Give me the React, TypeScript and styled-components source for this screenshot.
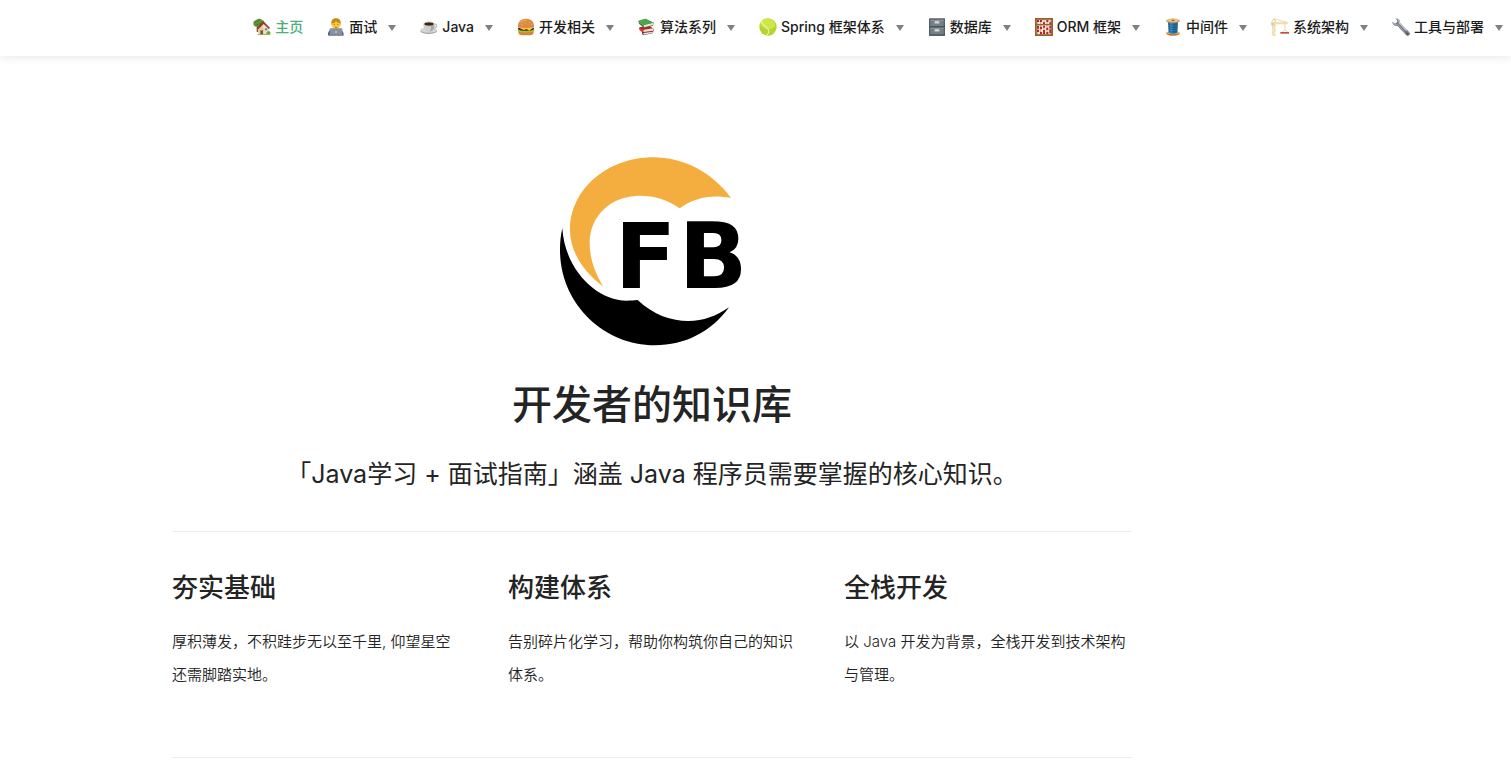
import React from "react";
import styled, { createGlobalStyle } from "styled-components";

const GlobalStyle = createGlobalStyle`
  *, *::before, *::after { box-sizing: border-box; }
  body {
    margin: 0;
    background: #fff;
    color: #242424;
    font-family: Inter, "Noto Sans CJK SC", "Liberation Sans", sans-serif;
    -webkit-font-smoothing: antialiased;
  }
`;

const Header = styled.header`
  padding: 16px 8px 18px;
  background: #fff;
  box-shadow: 0 2px 8px #e9eaec;
`;

const NavList = styled.ul`
  display: flex;
  justify-content: flex-end;
  gap: 24px;
  margin: 0;
  padding: 0;
  list-style: none;
`;

const navItem = `
  display: flex;
  align-items: center;
  gap: 4px;
  padding: 0;
  border: 0;
  background: none;
  font: inherit;
  font-size: 14px;
  font-weight: 500;
  line-height: 22px;
  white-space: nowrap;
  text-decoration: none;
  cursor: pointer;
`;

const NavLink = styled.a`
  ${navItem}
  color: #4dae7c;
`;

const NavButton = styled.button`
  ${navItem}
  color: #1c1c1c;
`;

const Caret = styled.span`
  margin: 2px 0 0 7px;
  border-left: 4px solid transparent;
  border-right: 4px solid transparent;
  border-top: 6px solid #808080;
`;

const Icon = styled.svg`
  flex: none;
  width: 18px;
  height: 18px;
`;

const Page = styled.div`
  padding: 0 207px 0 0;

  @media (max-width: 1200px) {
    padding: 0 24px;
  }
`;

const Main = styled.main`
  max-width: 960px;
  margin: 0 auto;
  padding-top: 94px;
`;

const Hero = styled.section`
  display: flex;
  flex-direction: column;
  align-items: center;
  padding-bottom: 40px;
  text-align: center;
`;

const Logo = styled.svg`
  width: 200px;
  height: 200px;
`;

const Title = styled.h1`
  margin: 30px 0 0;
  font-size: 40px;
  font-weight: 500;
  line-height: 50px;
`;

const Tagline = styled.p`
  margin: 27px 0 0;
  font-size: 25px;
  font-weight: 400;
  line-height: 34px;
`;

const Features = styled.section`
  display: flex;
  flex-wrap: wrap;
  justify-content: space-between;
  padding: 40px 0 66px;
  border-top: 1px solid #eaecef;
  border-bottom: 1px solid #eaecef;
`;

const Feature = styled.article`
  flex: 0 0 30%;
`;

const FeatureTitle = styled.h2`
  margin: 0 0 21px;
  font-size: 26px;
  font-weight: 500;
  line-height: 32px;
`;

const FeatureText = styled.p`
  margin: 0;
  font-size: 15px;
  font-weight: 350;
  line-height: 33px;
`;

const houseIcon = (
  <>
    <rect x="11" y="24" width="5" height="18" fill="#80552f" />
    <path d="M2 20C-1 12 4 7 9 7c4-6 14-6 18-1 6 0 9 7 5 12-2 7-8 7-13 6-5 4-15 3-17-4z" fill="#5a9436" />
    <path d="M6 13c4-4 9-3 12-6M9 21c5-2 9-1 14-5" stroke="#3f7526" strokeWidth="2" fill="none" />
    <path d="M17 29 32 16l17 14v19H17z" fill="#f3dfba" />
    <path d="M17 31 24 21l8 10v18H17z" fill="#e5caa0" />
    <path d="M12 30 27 11h6l18 19-4 3-15-15-16 16z" fill="#8f3d35" />
    <rect x="22" y="37" width="8" height="13" fill="#8a552c" />
    <rect x="35" y="30" width="8" height="8" fill="#648ca8" stroke="#fff" strokeWidth="1" />
    <path d="M14 50h38v-3c2-5-2-9-6-7-5 0-6 4-6 8H14z" fill="#6da544" />
  </>
);

const coderIcon = (
  <>
    <path d="M3 52c0-12 5-17 14-18h18c10 1 15 7 15 18z" fill="#3347b8" />
    <path d="M20 28h13v9l-7 4-6-4z" fill="#e9ae2e" />
    <path d="M13 17C12 6 18 1 27 1s15 5 14 16l-2 8H15z" fill="#c78a18" />
    <path d="M15 16c6 0 10-3 12-7 3 4 7 6 12 7 0 11-4 18-12 18S15 27 15 16z" fill="#ffc93c" />
    <path d="M20 19h4M30 19h4M23 27q4 3 8 0" stroke="#855015" strokeWidth="2" fill="none" />
    <rect x="8" y="31" width="38" height="21" rx="2" fill="#8c929b" />
    <path d="M5 50h44v3H5z" fill="#737982" />
    <circle cx="27" cy="42" r="2.5" fill="#e8edf3" />
  </>
);

const coffeeIcon = (
  <>
    <ellipse cx="26" cy="39" rx="25" ry="9" fill="#a4a4a3" />
    <ellipse cx="26" cy="36" rx="25" ry="8" fill="#d6d6d4" />
    <path d="M42 18c9-2 11 9 1 13" fill="none" stroke="#bcbcb9" strokeWidth="4" />
    <path d="M10 17h34c0 14-6 24-17 24S10 31 10 17z" fill="#cfcfcc" />
    <path d="M32 20h12c-1 12-6 20-15 21 4-6 4-14 3-21z" fill="#a9a9a6" />
    <ellipse cx="27" cy="17" rx="17" ry="7" fill="#e3e3e0" />
    <ellipse cx="27" cy="18" rx="14" ry="5" fill="#402319" />
    <path d="M23 13c-3-4 4-6 1-11M30 13c-2-4 4-5 1-9" stroke="#dedede" strokeWidth="2" fill="none" />
  </>
);

const burgerIcon = (
  <>
    <path d="M4 38h46c1 9-3 14-12 14H16C7 52 3 47 4 38z" fill="#d4853a" />
    <path d="M2 36c4-4 8 2 12-1h25c5 2 9-2 13 1 1 5-5 7-9 5-5 4-9 0-13 2-4-2-8 2-13-1-7 2-16 0-15-6z" fill="#9cc63a" />
    <path d="M3 29h48v5c-8 6-40 6-48 0z" fill="#4c2317" />
    <path d="M5 29h44L36 38l-7-5-8 3z" fill="#ffcb31" />
    <path d="M3 27C2 10 12 2 27 2s25 8 24 25c-4 4-44 4-48 0z" fill="#dc8b42" />
    <path d="M8 17C12 7 21 4 31 6c-9 1-18 4-23 11z" fill="#f2b36d" />
    <path d="M17 12h2M27 9h2M36 13h2M24 16h2M43 19h2M14 20h2" stroke="#ffe4b0" strokeWidth="2" />
  </>
);

const booksIcon = (
  <>
    <path d="m12 40 28-4 6 9-29 7-5-4z" fill="#32496c" />
    <path d="m15 44 27-5 3 5-27 6z" fill="#e8e9e5" />
    <path d="m4 28 31-5 12 10-1 8-30 4L4 35z" fill="#b91f24" />
    <path d="m14 36 31-5v7l-29 4z" fill="#eee9dd" />
    <path d="M16 43 5 34v-5l12 8z" fill="#e03a36" />
    <path d="M1 9 22 2l25 12-2 9-27 7L3 17z" fill="#2e813e" />
    <path d="m17 21 28-7v7l-27 7z" fill="#e8e8d9" />
    <path d="M1 9 22 2l25 12-29 7z" fill="#54a249" />
    <path d="m2 12 15 9" stroke="#79c765" strokeWidth="2" />
  </>
);

const tennisIcon = (
  <>
    <circle cx="27" cy="27" r="26" fill="#b7d532" />
    <path d="M4 15C9 4 23-1 35 3c10 5 14 12 13 22-8 10-24 11-33 5C8 26 5 22 4 15z" fill="#cfe648" />
    <path d="M7 10c2 13 20 14 22 27 1 6-2 10-5 15" fill="none" stroke="#f7f9dc" strokeWidth="3" />
  </>
);

const cabinetIcon = (
  <>
    <rect x="3" y="1" width="48" height="52" rx="2" fill="#555f65" />
    <rect x="7" y="5" width="40" height="20" fill="#748087" />
    <rect x="7" y="29" width="40" height="20" fill="#748087" />
    <path d="M7 5h40v4H7zM7 29h40v4H7z" fill="#89949a" />
    <rect x="20" y="10" width="14" height="7" rx="1" fill="#e5e9e9" />
    <rect x="20" y="34" width="14" height="7" rx="1" fill="#e5e9e9" />
    <path d="M21 14h12v4H21zM21 38h12v4H21z" fill="#a0a9ac" />
    <path d="M3 26h48M3 52h48" stroke="#394348" strokeWidth="2" />
  </>
);

const abacusIcon = (
  <>
    <rect width="54" height="54" fill="#94602b" />
    <rect x="5" y="5" width="44" height="44" fill="#f4e8dc" />
    <path d="M8 5v44M17 5v44M27 5v44M36 5v44M46 5v44" stroke="#b88a56" strokeWidth="2" />
    <path d="M6 6h6v6H6zm9 0h6v6h-6zm19 0h6v6h-6zM24 13h6v6h-6zm19 0h6v6h-6zM6 24h6v8H6zm9 2h6v7h-6zm9-2h6v5h-6zm10 5h6v7h-6zm9-5h6v7h-6zM6 35h6v7H6zm9 7h6v7h-6zm9-6h6v13h-6zm10 6h6v7h-6zm9-8h6v12h-6z" fill="#ba2428" />
    <path d="M3 20h48" stroke="#94602b" strokeWidth="4" />
    <rect x="2" y="2" width="50" height="50" fill="none" stroke="#94602b" strokeWidth="4" />
  </>
);

const threadIcon = (
  <>
    <path d="M7 44h40v3c-4 8-36 8-40 0z" fill="#b8793f" />
    <ellipse cx="27" cy="44" rx="20" ry="5" fill="#e2b67c" />
    <path d="M12 10h30l-2 34c-7 4-19 4-26 0z" fill="#226fa5" />
    <path d="M18 12h8v34l-8-1z" fill="#3c91c5" />
    <path d="M13 18c8 4 20 4 28 0M13 25c8 4 20 4 28 0M13 32c8 4 20 4 28 0M14 39c8 4 18 4 26 0" fill="none" stroke="#145581" strokeWidth="2" />
    <path d="M7 7h40v3c-4 8-36 8-40 0z" fill="#b8793f" />
    <ellipse cx="27" cy="7" rx="20" ry="6" fill="#e8be85" />
    <ellipse cx="27" cy="7" rx="5" ry="2" fill="#8c582b" />
  </>
);

const craneIcon = (
  <>
    <path d="M5 14h7v39H5z" fill="#fff6dc" stroke="#e8cf91" strokeWidth="2" />
    <path d="m5 16 7 7-7 7 7 7-7 7 7 7" fill="none" stroke="#e4c681" strokeWidth="2" />
    <path d="M1 13h48v5H1z" fill="#f7e4b4" stroke="#dfc27d" strokeWidth="1" />
    <path d="m2 12 7-10 5 10L9 2l38 11" fill="none" stroke="#dec68f" strokeWidth="2" />
    <path d="M1 15h7v8H1z" fill="#d5c8aa" />
    <path d="M42 18v18l-10 7m10-7 9 7" fill="none" stroke="#c8b38a" strokeWidth="1.5" />
    <path d="M28 42h26v5H28z" fill="#c94a3d" />
  </>
);

const wrenchIcon = (
  <>
    <path d="M10 1c8-1 15 4 14 13l27 29c6 6-3 14-9 8L16 23C8 26 0 19 1 11l8 6 7-5-2-7z" fill="#777b85" />
    <path d="M12 2c7 0 11 5 10 13l28 30" fill="none" stroke="#c3c7cd" strokeWidth="4" />
    <path d="M3 14c3 6 8 7 14 5l24 28" fill="none" stroke="#a4a8b0" strokeWidth="3" />
    <path d="m38 42 7-7 8 9c3 5-4 12-9 8z" fill="#6a5159" opacity=".55" />
    <circle cx="46" cy="46" r="2" fill="#3f4147" />
  </>
);

const menus = [
  { label: "面试", icon: coderIcon },
  { label: "Java", icon: coffeeIcon },
  { label: "开发相关", icon: burgerIcon },
  { label: "算法系列", icon: booksIcon },
  { label: "Spring 框架体系", icon: tennisIcon },
  { label: "数据库", icon: cabinetIcon },
  { label: "ORM 框架", icon: abacusIcon },
  { label: "中间件", icon: threadIcon },
  { label: "系统架构", icon: craneIcon },
  { label: "工具与部署", icon: wrenchIcon },
];

const features = [
  { title: "夯实基础", text: "厚积薄发，不积跬步无以至千里, 仰望星空还需脚踏实地。" },
  { title: "构建体系", text: "告别碎片化学习，帮助你构筑你自己的知识体系。" },
  { title: "全栈开发", text: "以 Java 开发为背景，全栈开发到技术架构与管理。" },
];

const NavIcon = ({ children }: { children: React.ReactNode }) => (
  <Icon viewBox="0 0 54 54" aria-hidden="true">
    {children}
  </Icon>
);

export default function App() {
  return (
    <>
      <GlobalStyle />
      <Header>
        <nav>
          <NavList>
            <li>
              <NavLink href="#home">
                <NavIcon>{houseIcon}</NavIcon>
                主页
              </NavLink>
            </li>
            {menus.map(({ label, icon }) => (
              <li key={label}>
                <NavButton type="button">
                  <NavIcon>{icon}</NavIcon>
                  {label}
                  <Caret />
                </NavButton>
              </li>
            ))}
          </NavList>
        </nav>
      </Header>
      <Page>
        <Main>
          <Hero>
            <Logo viewBox="36 30 600 600" role="img">
              <path
                fill="#f4ae40"
                d="M573 174C515 95 430 52 340 52C200 52 90 150 90 270C90 335 130 395 190 440C165 400 149 355 149 310C149 225 215 167 300 167C345 167 385 180 419 205C465 172 515 163 573 174Z"
              />
              <path
                fill="#000"
                d="M67 265C75 390 170 482 260 482C272 482 282 481 293 480C340 525 395 543 445 543C490 543 530 528 567 502C515 575 435 616 345 616C190 616 60 490 60 330C60 308 62 285 67 265Z"
              />
              <text x="224 416" y="445" fontFamily="DejaVu Sans, sans-serif" fontWeight="700" fontSize="270">
                FB
              </text>
            </Logo>
            <Title>开发者的知识库</Title>
            <Tagline>「Java学习 + 面试指南」涵盖 Java 程序员需要掌握的核心知识。</Tagline>
          </Hero>
          <Features>
            {features.map(({ title, text }) => (
              <Feature key={title}>
                <FeatureTitle>{title}</FeatureTitle>
                <FeatureText>{text}</FeatureText>
              </Feature>
            ))}
          </Features>
        </Main>
      </Page>
    </>
  );
}
